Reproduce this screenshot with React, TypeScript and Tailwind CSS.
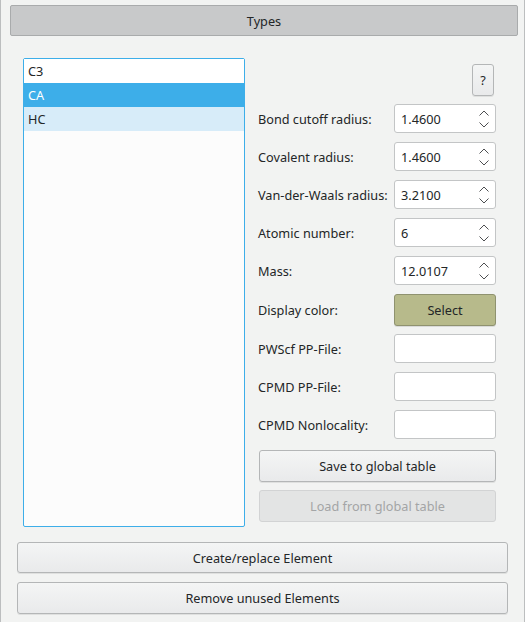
const Chevrons = () => (
  <svg width="12" height="22" viewBox="0 0 12 22" className="text-[#4d4f51]">
    <path d="M1.5 7.5 L6 3 L10.5 7.5" fill="none" stroke="currentColor" strokeWidth="1" />
    <path d="M1.5 14.5 L6 19 L10.5 14.5" fill="none" stroke="currentColor" strokeWidth="1" />
  </svg>
);

const SpinBox = ({ value }: { value: string }) => (
  <div className="flex h-[29px] w-[102px] items-center justify-between rounded-[3px] border border-[#c3c5c6] bg-white pl-[6px] pr-[5px]">
    <span className="mt-[2px]">{value}</span>
    <Chevrons />
  </div>
);

const TextBox = () => (
  <div className="h-[29px] w-[102px] rounded-[3px] border border-[#c3c5c6] bg-white" />
);

const btn =
  "flex items-center justify-center rounded-[3px] border border-[#b4b6b7] bg-gradient-to-b from-[#f4f5f5] to-[#e9eaeb] shadow-[0_1px_0_rgba(0,0,0,0.08)]";

const Row = ({ label, children, className }: { label: string; children: React.ReactNode; className?: string }) => (
  <div className={"flex items-center " + (className ?? "")}>
    <span className="mt-[2px] w-[136px] whitespace-nowrap">{label}</span>
    {children}
  </div>
);

export default function App() {
  return (
    <div
      className="h-[622px] w-[525px] border-x border-[#bcbebf] bg-[#f2f3f2] text-[12.7px] text-[#232627]"
      style={{ fontFamily: '"Noto Sans", sans-serif' }}
    >
      <div className="pt-[5px] pl-[9px] pr-[6px]">
        <div className="flex h-[31px] items-center justify-center rounded-[2px] border border-[#a9abac] bg-[#c8c9ca]">
          <span className="mt-[2px]">Types</span>
        </div>
      </div>

      <div className="mt-[22px] flex pl-[22px]">
        <div className="h-[469px] w-[222px] rounded-[2px] border border-[#3daee9] bg-[#fcfcfc]">
          <div className="flex h-[24px] items-center bg-white pl-[4px] pt-[2px]">C3</div>
          <div className="flex h-[24px] items-center bg-[#3daee9] pl-[4px] pt-[2px] text-white">CA</div>
          <div className="flex h-[24px] items-center bg-[#d7ecf9] pl-[4px] pt-[2px]">HC</div>
        </div>

        <div className="ml-[13px] flex w-[239px] flex-col">
          <div className="mt-[6px] flex justify-end pr-[3px]">
            <div className={btn + " h-[32px] w-[22px]"}>
              <span className="mt-[2px]">?</span>
            </div>
          </div>
          <div className="mt-[8px] flex flex-col gap-[9px]">
            <Row label="Bond cutoff radius:">
              <SpinBox value="1.4600" />
            </Row>
            <Row label="Covalent radius:">
              <SpinBox value="1.4600" />
            </Row>
            <Row label="Van-der-Waals radius:">
              <SpinBox value="3.2100" />
            </Row>
            <Row label="Atomic number:">
              <SpinBox value="6" />
            </Row>
            <Row label="Mass:">
              <SpinBox value="12.0107" />
            </Row>
          </div>
          <Row label="Display color:" className="mt-[9px]">
            <div className="flex h-[32px] w-[102px] items-center justify-center rounded-[3px] border border-[#8f926f] bg-[#b7ba8b] shadow-[0_1px_0_rgba(0,0,0,0.1)]">
              <span className="mt-[2px]">Select</span>
            </div>
          </Row>
          <div className="mt-[8px] flex flex-col gap-[9px]">
            <Row label="PWScf PP-File:">
              <TextBox />
            </Row>
            <Row label="CPMD PP-File:">
              <TextBox />
            </Row>
            <Row label="CPMD Nonlocality:">
              <TextBox />
            </Row>
          </div>
          <div className={btn + " mt-[11px] ml-[1px] h-[32px] w-[237px]"}>
            <span className="mt-[2px]">Save to global table</span>
          </div>
          <div className="mt-[8px] ml-[1px] flex h-[32px] w-[237px] items-center justify-center rounded-[3px] border border-[#d2d3d4] bg-[#e3e4e4] text-[#a3a5a6]">
            <span className="mt-[2px]">Load from global table</span>
          </div>
        </div>
      </div>

      <div className="mt-[15px] flex flex-col gap-[9px] pl-[16px] pr-[16px]">
        <div className={btn + " h-[31px]"}>
          <span className="mt-[2px]">Create/replace Element</span>
        </div>
        <div className={btn + " h-[32px]"}>
          <span className="mt-[2px]">Remove unused Elements</span>
        </div>
      </div>
    </div>
  );
}
